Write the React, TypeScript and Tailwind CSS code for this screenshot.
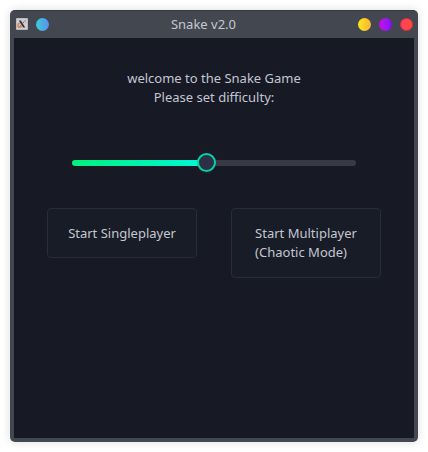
import { useState } from "react";
import type { CSSProperties } from "react";

function TitleBar() {
  return (
    <header className="flex h-7 items-center justify-between pr-[5px] pl-[6px]">
      <div className="flex items-center gap-2">
        <svg className="size-3" viewBox="0 0 12 12" aria-hidden="true">
          <rect x="0" y="0" width="12" height="12" rx="1" fill="#b9bbbf" />
          <rect x="1" y="1" width="10" height="10" fill="#cfcfd0" />
          <path d="M2.800 2.500h2.200l4.200 7H7z" fill="#34363c" />
          <path d="M9.400 2.400 6.700 5.400M5 7.200 3 9.600" stroke="#55575e" strokeWidth="1" />
          <path d="M4 5C1.800 6 1.200 8.200 2.600 9c1 .6 2.600 0 3.600-1" fill="none" stroke="#e58258" strokeWidth="1.500" />
          <path d="M7.200 4c1.400-.7 2.600-.6 2.700.4" fill="none" stroke="#dfa388" strokeWidth="1" />
        </svg>
        <button
          type="button"
          aria-label="Keep on top"
          className="size-[13px] rounded-full bg-linear-to-r from-[#36cdd8] to-[#5a8df0]"
        />
      </div>
      <h1 className="text-[13px] leading-[19px]">Snake v2.0</h1>
      <div className="flex items-center gap-2">
        <button
          type="button"
          aria-label="Minimize"
          className="size-[13px] rounded-full bg-linear-to-r from-[#fde910] to-[#fbb034]"
        />
        <button
          type="button"
          aria-label="Maximize"
          className="size-[13px] rounded-full bg-linear-to-r from-[#c408e0] to-[#8408fa]"
        />
        <button
          type="button"
          aria-label="Close"
          className="size-[13px] rounded-full border border-[#ee2a48] bg-linear-to-r from-[#fb4064] to-[#fd4e28]"
        />
      </div>
    </header>
  );
}

function DifficultySlider() {
  const [value, setValue] = useState(47);
  return (
    <input
      id="difficulty"
      type="range"
      min={0}
      max={100}
      value={value}
      onChange={(e) => setValue(Number(e.target.value))}
      style={{ "--fill": `${value}%` } as CSSProperties}
      className="block h-[19px] w-full cursor-pointer appearance-none bg-transparent outline-none [&::-webkit-slider-runnable-track]:h-[6px] [&::-webkit-slider-runnable-track]:rounded-full [&::-webkit-slider-runnable-track]:bg-[linear-gradient(to_right,#00f17b,#00f7d8_var(--fill),#383944_var(--fill))] [&::-webkit-slider-thumb]:mt-[-7px] [&::-webkit-slider-thumb]:size-[19px] [&::-webkit-slider-thumb]:appearance-none [&::-webkit-slider-thumb]:rounded-full [&::-webkit-slider-thumb]:border-2 [&::-webkit-slider-thumb]:border-[#04d1a4] [&::-webkit-slider-thumb]:bg-[#2c3044]"
    />
  );
}

const startButton =
  "flex w-[150px] items-center justify-center rounded-[4px] border border-[#2a2c38] bg-[#181c27] text-left";

export default function App() {
  return (
    <div className="min-h-screen bg-white p-[10px] font-['Noto_Sans',sans-serif] text-[13px] leading-[19px] text-[#c3c7d1]">
      <div className="rounded-[5px] border-t border-[#373a42] bg-[#434750] shadow-[0_0_10px_rgba(0,0,0,0.14)]">
        <div className="-mt-px">
          <TitleBar />
        </div>
        <div className="px-1 pb-1">
          <main className="min-h-[400px] bg-[#171925] pt-[31px]">
            <label htmlFor="difficulty" className="block text-center">
              welcome to the Snake Game
              <br />
              Please set difficulty:
            </label>
            <div className="mt-[46px] px-[58px]">
              <DifficultySlider />
            </div>
            <div className="mt-9 flex items-start justify-between px-[33px]">
              <button type="button" className={`${startButton} h-[50px]`}>
                Start Singleplayer
              </button>
              <button type="button" className={`${startButton} h-[70px]`}>
                <span>
                  Start Multiplayer
                  <br />
                  (Chaotic Mode)
                </span>
              </button>
            </div>
          </main>
        </div>
      </div>
    </div>
  );
}
